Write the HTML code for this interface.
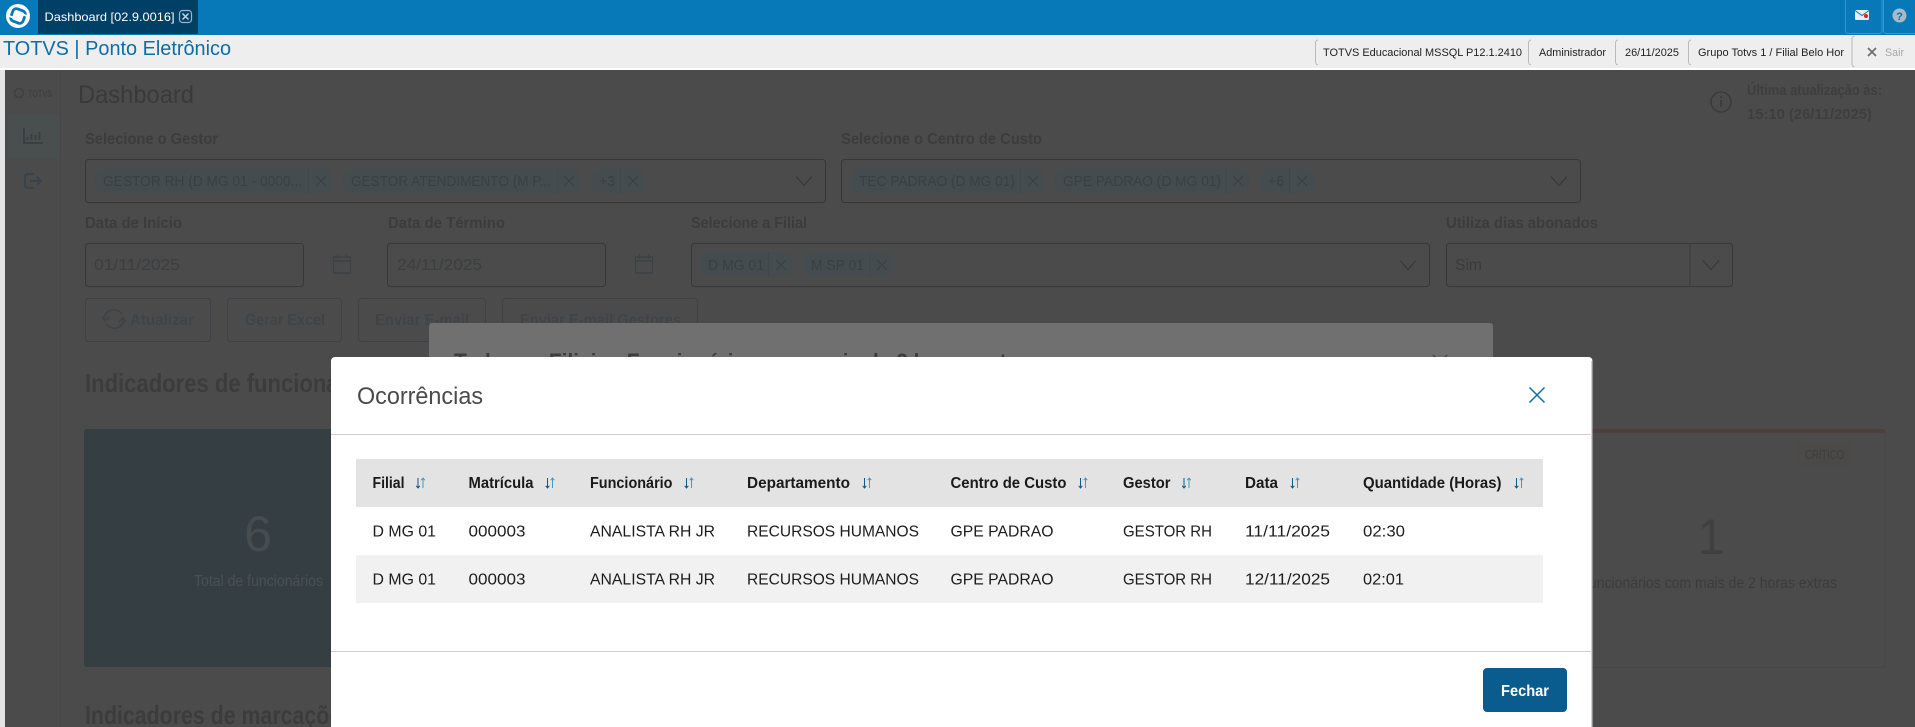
<!DOCTYPE html>
<html lang="pt-BR">
<head>
<meta charset="utf-8">
<title>TOTVS | Ponto Eletrônico</title>
<style>
html,body{margin:0;padding:0;width:1915px;height:727px;overflow:hidden;background:#4b4b4b}
svg{display:block;font-family:"Liberation Sans",sans-serif}
.lb{font-size:16px;font-weight:700;fill:#3c3c3c}
.chip{fill:#444c4f}
.chipt{font-size:15px;fill:#3a3f42}
.ic{fill:none;stroke:#3b4145;stroke-width:1.2}
.box{fill:none;stroke:#383838;stroke-width:1}
.btn{fill:none;stroke:#39434a;stroke-width:1}
.btnt{font-size:16px;font-weight:700;fill:#3e454a}
.th{font-size:16px;font-weight:700;fill:#1a1a1a}
.td{font-size:16px;fill:#1c1c1c}
.tp{font-size:11px;fill:#222}
.sep{stroke:#b9b9b9;stroke-width:1;fill:none}
.so1{fill:none;stroke:#0b5c8c;stroke-width:1}
.so2{fill:none;stroke:#3d9bd0;stroke-width:1}
</style>
</head>
<body>
<svg width="1915" height="727" viewBox="0 0 1915 727" xmlns="http://www.w3.org/2000/svg">
<defs>
<g id="sort">
<path class="so1" d="M-2.500-5V5M-4.300 2.800-2.500 5-.7 2.800"/>
<path class="so2" d="M2.500 5V-5M.7-2.800 2.500-5 4.300-2.800"/>
</g>
<g id="chev"><path fill="none" stroke="#383838" stroke-width="1.2" d="M-8-4.500 0 4.500 8-4.500"/></g>
<g id="x"><path fill="none" stroke="#3b4145" stroke-width="1.1" d="M-5-5 5 5M5-5-5 5"/></g>
<g id="cal"><path class="ic" d="M-8.500-7h17v16h-17zM-8.500-3h17M-4.500-9.500v4M4.500-9.500v4"/></g>
</defs>

<!-- top bar -->
<rect width="1915" height="35" fill="#0779b8"/>
<circle cx="18" cy="16" r="12" fill="#fff"/>
<rect x="11.500" y="9.500" width="13" height="13" rx="3.500" fill="none" stroke="#0779b8" stroke-width="2.800" transform="rotate(20 18 16)"/>
<path d="M8 15.500l6 2.500M22 14l6 2.500" stroke="#fff" stroke-width="2" fill="none"/>

<path d="M38 0h160v33a1 1 0 0 1-1 1H39a1 1 0 0 1-1-1z" fill="#003f66"/>
<text x="44.500" y="21" font-size="12" fill="#fff" textLength="130" lengthAdjust="spacingAndGlyphs">Dashboard [02.9.0016]</text>
<rect x="179.500" y="10.500" width="12" height="12" rx="3" fill="none" stroke="#9fb6c5" stroke-width="1.2"/>
<path d="M182.500 13.500l6 6M188.500 13.500l-6 6" stroke="#c6d4dd" stroke-width="1.500" fill="none"/>
<path d="M1845.500 0v31a2.500 2.500 0 0 0 2.500 2.500h31.500a2.500 2.500 0 0 0 2.500-2.500V0M1883.500 0v31a2.500 2.500 0 0 0 2.500 2.500h29" fill="none" stroke="#2f97dc"/>
<rect x="1855" y="10" width="14" height="10" rx="1" fill="#e9eef1"/>
<path d="M1855 10.500l7 5 7-5" stroke="#0779b8" stroke-width="1" fill="none"/>
<circle cx="1866" cy="16" r="2" fill="#e8202a"/>
<circle cx="1899.500" cy="15.500" r="7" fill="#a7bbc7"/>
<text x="1899.500" y="20" font-size="11" font-weight="700" fill="#0b6ea8" text-anchor="middle">?</text>

<!-- title bar -->
<rect y="35" width="1915" height="33" fill="#eee"/>
<rect y="68" width="1915" height="2" fill="#fff"/>
<text x="3" y="55" font-size="20.500" fill="#0b6ea8" textLength="228" lengthAdjust="spacingAndGlyphs">TOTVS | Ponto Eletrônico</text>
<path class="sep" d="M1318 40a3 3 0 0 0-2.500 3v19a3 3 0 0 0 2.500 3M1531 40a3 3 0 0 0-2.500 3v19a3 3 0 0 0 2.500 3M1618 40a3 3 0 0 0-2.500 3v19a3 3 0 0 0 2.500 3M1691 40a3 3 0 0 0-2.500 3v19a3 3 0 0 0 2.500 3M1854.500 36a3 3 0 0 0-2.500 3v25a3 3 0 0 0 2.500 3"/>
<text class="tp" x="1323" y="56" textLength="199" lengthAdjust="spacingAndGlyphs">TOTVS Educacional MSSQL P12.1.2410</text>
<text class="tp" x="1539" y="56" textLength="67" lengthAdjust="spacingAndGlyphs">Administrador</text>
<text class="tp" x="1625" y="56" textLength="54" lengthAdjust="spacingAndGlyphs">26/11/2025</text>
<text class="tp" x="1698" y="56" textLength="146" lengthAdjust="spacingAndGlyphs">Grupo Totvs 1 / Filial Belo Hor</text>
<path d="M1868 48l8 8M1876 48l-8 8" stroke="#6d6d6d" stroke-width="1.700" fill="none"/>
<text x="1885" y="56" font-size="11" fill="#a8a8a8" textLength="19" lengthAdjust="spacingAndGlyphs">Sair</text>

<!-- dimmed page -->
<rect y="70" width="1915" height="657" fill="#4b4b4b"/>
<rect y="70" width="5" height="657" fill="#e3e3e3"/>
<rect x="60" y="70" width="1" height="657" fill="#474747"/>
<rect x="8" y="115" width="52" height="44" fill="#494e4f"/>
<circle cx="19" cy="93" r="4.500" fill="none" stroke="#404040" stroke-width="1.500"/>
<text x="28" y="97" font-size="10" font-weight="700" fill="#404040" textLength="24" lengthAdjust="spacingAndGlyphs">TOTVS</text>
<path d="M24 128v15h19M27.500 140v-3M31.500 140v-6M35.500 140v-5M39.500 140v-8" fill="none" stroke="#363e43" stroke-width="1.700"/>
<path d="M34 174h-6a3 3 0 0 0-3 3v8a3 3 0 0 0 3 3h6M30 181h11M37 177l4 4-4 4" fill="none" stroke="#36434c" stroke-width="2"/>

<text x="78" y="103" font-size="25" fill="#3a3a3a" textLength="116" lengthAdjust="spacingAndGlyphs">Dashboard</text>
<circle cx="1721" cy="102" r="10" fill="none" stroke="#393939" stroke-width="1.300"/>
<path d="M1721 100v7M1721 96v2" stroke="#393939" stroke-width="1.500"/>
<text x="1747" y="95" font-size="15" font-weight="700" fill="#3e3e3e" textLength="135" lengthAdjust="spacingAndGlyphs">Última atualização às:</text>
<text x="1747" y="119" font-size="15" font-weight="700" fill="#3e3e3e" textLength="125" lengthAdjust="spacingAndGlyphs">15:10 (26/11/2025)</text>

<!-- first row -->
<text class="lb" x="85" y="144" textLength="133" lengthAdjust="spacingAndGlyphs">Selecione o Gestor</text>
<text class="lb" x="841" y="144" textLength="201" lengthAdjust="spacingAndGlyphs">Selecione o Centro de Custo</text>
<rect class="box" x="85.500" y="159.500" width="740" height="43" rx="3"/>
<rect class="box" x="841.500" y="159.500" width="739" height="43" rx="3"/>
<use href="#chev" x="804" y="181"/><use href="#chev" x="1559" y="181"/>

<rect class="chip" x="94" y="168" width="240" height="25" rx="12.500"/>
<text class="chipt" x="103" y="186" textLength="199" lengthAdjust="spacingAndGlyphs">GESTOR RH (D MG 01 - 0000...</text>
<path d="M308.500 168v25" stroke="#3f474a"/><use href="#x" x="321" y="181"/>
<rect class="chip" x="342" y="168" width="240" height="25" rx="12.500"/>
<text class="chipt" x="351" y="186" textLength="200" lengthAdjust="spacingAndGlyphs">GESTOR ATENDIMENTO (M P...</text>
<path d="M557 168v25" stroke="#3f474a"/><use href="#x" x="569" y="181"/>
<rect class="chip" x="591" y="168" width="55" height="25" rx="12.500"/>
<text class="chipt" x="599" y="186" textLength="16" lengthAdjust="spacingAndGlyphs">+3</text>
<path d="M620.500 168v25" stroke="#3f474a"/><use href="#x" x="633" y="181"/>

<rect class="chip" x="850" y="168" width="196" height="25" rx="12.500"/>
<text class="chipt" x="859" y="186" textLength="156" lengthAdjust="spacingAndGlyphs">TEC PADRAO (D MG 01)</text>
<path d="M1020.500 168v25" stroke="#3f474a"/><use href="#x" x="1033" y="181"/>
<rect class="chip" x="1054" y="168" width="196" height="25" rx="12.500"/>
<text class="chipt" x="1063" y="186" textLength="158" lengthAdjust="spacingAndGlyphs">GPE PADRAO (D MG 01)</text>
<path d="M1226 168v25" stroke="#3f474a"/><use href="#x" x="1238" y="181"/>
<rect class="chip" x="1259" y="168" width="56" height="25" rx="12.500"/>
<text class="chipt" x="1268" y="186" textLength="16" lengthAdjust="spacingAndGlyphs">+6</text>
<path d="M1289.500 168v25" stroke="#3f474a"/><use href="#x" x="1302" y="181"/>

<!-- second row -->
<text class="lb" x="85" y="228" textLength="97" lengthAdjust="spacingAndGlyphs">Data de Início</text>
<text class="lb" x="388" y="228" textLength="117" lengthAdjust="spacingAndGlyphs">Data de Término</text>
<text class="lb" x="691" y="228" textLength="116" lengthAdjust="spacingAndGlyphs">Selecione a Filial</text>
<text class="lb" x="1446" y="228" textLength="152" lengthAdjust="spacingAndGlyphs">Utiliza dias abonados</text>
<rect class="box" x="85.500" y="243.500" width="218" height="43" rx="3"/>
<text x="94" y="270" font-size="16" fill="#3c3e40" textLength="86" lengthAdjust="spacingAndGlyphs">01/11/2025</text>
<use href="#cal" x="342" y="264"/>
<rect class="box" x="387.500" y="243.500" width="218" height="43" rx="3"/>
<text x="397" y="270" font-size="16" fill="#3c3e40" textLength="85" lengthAdjust="spacingAndGlyphs">24/11/2025</text>
<use href="#cal" x="644" y="264"/>
<rect class="box" x="691.500" y="243.500" width="738" height="43" rx="3"/>
<rect class="chip" x="700" y="252" width="94" height="25" rx="12.500"/>
<text class="chipt" x="708" y="270" textLength="56" lengthAdjust="spacingAndGlyphs">D MG 01</text>
<path d="M768.500 252v25" stroke="#3f474a"/><use href="#x" x="781" y="265"/>
<rect class="chip" x="802" y="252" width="93" height="25" rx="12.500"/>
<text class="chipt" x="811" y="270" textLength="53" lengthAdjust="spacingAndGlyphs">M SP 01</text>
<path d="M870 252v25" stroke="#3f474a"/><use href="#x" x="882" y="265"/>
<use href="#chev" x="1408" y="265"/>
<rect class="box" x="1446.500" y="243.500" width="286" height="43" rx="3"/>
<path d="M1690 243.500v43" stroke="#383838"/>
<text x="1455" y="270" font-size="15.500" fill="#3b3b3b" textLength="27" lengthAdjust="spacingAndGlyphs">Sim</text>
<use href="#chev" x="1711" y="265"/>

<!-- buttons -->
<rect class="btn" x="85.500" y="298.500" width="125" height="43" rx="3"/>
<g fill="none" stroke="#3c444a" stroke-width="1.600">
<path d="M104 318a10 10 0 0 1 18-4M124 320a10 10 0 0 1-18 4"/>
<path d="M102 317l3 4 4-4M119 322l4-4 3 4"/>
</g>
<text class="btnt" x="130" y="325" textLength="64" lengthAdjust="spacingAndGlyphs">Atualizar</text>
<rect class="btn" x="227.500" y="298.500" width="114" height="43" rx="3"/>
<text class="btnt" x="245" y="325" textLength="80" lengthAdjust="spacingAndGlyphs">Gerar Excel</text>
<rect class="btn" x="358.500" y="298.500" width="127" height="43" rx="3"/>
<text class="btnt" x="375" y="325" textLength="94" lengthAdjust="spacingAndGlyphs">Enviar E-mail</text>
<rect class="btn" x="502.500" y="298.500" width="195" height="43" rx="3"/>
<text class="btnt" x="520" y="325" textLength="161" lengthAdjust="spacingAndGlyphs">Enviar E-mail Gestores</text>

<!-- section headings and cards -->
<text x="85" y="392" font-size="26" font-weight="700" fill="#3c3c3c" textLength="294" lengthAdjust="spacingAndGlyphs">Indicadores de funcionários</text>
<rect x="84" y="429" width="300" height="238" rx="3" fill="#353f43"/>
<text x="258" y="551" font-size="50" fill="#474c4f" text-anchor="middle">6</text>
<text x="194" y="586" font-size="15.500" fill="#495053" textLength="129" lengthAdjust="spacingAndGlyphs">Total de funcionários</text>
<text x="85" y="724" font-size="26" font-weight="700" fill="#3c3c3c" textLength="268" lengthAdjust="spacingAndGlyphs">Indicadores de marcações</text>

<rect x="1500" y="429.500" width="385" height="238" rx="3" fill="none" stroke="#474747"/>
<path d="M1500 433v-1a3 3 0 0 1 3-3h379a3 3 0 0 1 3 3v1z" fill="#4e3e3e"/>
<rect x="1796" y="443" width="56" height="23" rx="3" fill="#4c4949"/>
<text x="1805" y="459" font-size="13" fill="#3e3e3e" textLength="39" lengthAdjust="spacingAndGlyphs">CRÍTICO</text>
<text x="1711" y="554" font-size="50" fill="#404040" text-anchor="middle">1</text>
<text x="1585" y="588" font-size="15.500" fill="#3c3c3c" textLength="252" lengthAdjust="spacingAndGlyphs">funcionários com mais de 2 horas extras</text>

<!-- background modal -->
<rect x="429" y="323" width="1064" height="120" rx="3" fill="#707070"/>
<text x="454" y="369" font-size="22" font-weight="700" fill="#3d3d3d" textLength="584" lengthAdjust="spacingAndGlyphs">Todas as Filiais - Funcionários com mais de 2 horas extras</text>
<path d="M1433 355l7 7 7-7" stroke="#3a4a55" stroke-width="1.500" fill="none"/>

<!-- foreground modal -->
<path d="M331 727V361a4 4 0 0 1 4-4h1253.500a4 4 0 0 1 4 4V727z" fill="#fff"/>
<rect x="1591" y="361" width="1.500" height="366" fill="#d0d0d0"/>
<text x="357" y="404" font-size="24" fill="#4a4a4a" textLength="126" lengthAdjust="spacingAndGlyphs">Ocorrências</text>
<path d="M1529.500 387.500l15 15M1544.500 387.500l-15 15" stroke="#0b6ea8" stroke-width="1.500" fill="none"/>
<rect x="331" y="434" width="1261" height="1" fill="#cfcfcf"/>

<rect x="356" y="459" width="1187" height="48" fill="#e3e3e3"/>
<rect x="356" y="555" width="1187" height="48" fill="#f1f1f1"/>

<text class="th" x="372.500" y="488" textLength="32" lengthAdjust="spacingAndGlyphs">Filial</text>
<text class="th" x="468.500" y="488" textLength="65" lengthAdjust="spacingAndGlyphs">Matrícula</text>
<text class="th" x="590" y="488" textLength="82.500" lengthAdjust="spacingAndGlyphs">Funcionário</text>
<text class="th" x="747" y="488" textLength="103" lengthAdjust="spacingAndGlyphs">Departamento</text>
<text class="th" x="950.500" y="488" textLength="116" lengthAdjust="spacingAndGlyphs">Centro de Custo</text>
<text class="th" x="1123" y="488" textLength="47.500" lengthAdjust="spacingAndGlyphs">Gestor</text>
<text class="th" x="1245" y="488" textLength="33" lengthAdjust="spacingAndGlyphs">Data</text>
<text class="th" x="1363" y="488" textLength="138.500" lengthAdjust="spacingAndGlyphs">Quantidade (Horas)</text>
<use href="#sort" x="420.500" y="483"/>
<use href="#sort" x="550" y="483"/>
<use href="#sort" x="689" y="483"/>
<use href="#sort" x="867" y="483"/>
<use href="#sort" x="1083" y="483"/>
<use href="#sort" x="1186.500" y="483"/>
<use href="#sort" x="1295" y="483"/>
<use href="#sort" x="1519" y="483"/>

<text class="td" x="372.500" y="536.500" textLength="63.500" lengthAdjust="spacingAndGlyphs">D MG 01</text>
<text class="td" x="468.500" y="536.500" textLength="57" lengthAdjust="spacingAndGlyphs">000003</text>
<text class="td" x="590" y="536.500" textLength="125" lengthAdjust="spacingAndGlyphs">ANALISTA RH JR</text>
<text class="td" x="747" y="536.500" textLength="172" lengthAdjust="spacingAndGlyphs">RECURSOS HUMANOS</text>
<text class="td" x="950.500" y="536.500" textLength="103" lengthAdjust="spacingAndGlyphs">GPE PADRAO</text>
<text class="td" x="1123" y="536.500" textLength="89" lengthAdjust="spacingAndGlyphs">GESTOR RH</text>
<text class="td" x="1245" y="536.500" textLength="85" lengthAdjust="spacingAndGlyphs">11/11/2025</text>
<text class="td" x="1363" y="536.500" textLength="42" lengthAdjust="spacingAndGlyphs">02:30</text>

<text class="td" x="372.500" y="584.500" textLength="63.500" lengthAdjust="spacingAndGlyphs">D MG 01</text>
<text class="td" x="468.500" y="584.500" textLength="57" lengthAdjust="spacingAndGlyphs">000003</text>
<text class="td" x="590" y="584.500" textLength="125" lengthAdjust="spacingAndGlyphs">ANALISTA RH JR</text>
<text class="td" x="747" y="584.500" textLength="172" lengthAdjust="spacingAndGlyphs">RECURSOS HUMANOS</text>
<text class="td" x="950.500" y="584.500" textLength="103" lengthAdjust="spacingAndGlyphs">GPE PADRAO</text>
<text class="td" x="1123" y="584.500" textLength="89" lengthAdjust="spacingAndGlyphs">GESTOR RH</text>
<text class="td" x="1245" y="584.500" textLength="85" lengthAdjust="spacingAndGlyphs">12/11/2025</text>
<text class="td" x="1363" y="584.500" textLength="41" lengthAdjust="spacingAndGlyphs">02:01</text>

<rect x="331" y="651" width="1261" height="1" fill="#cfcfcf"/>
<rect x="1483" y="668" width="84" height="44" rx="4" fill="#0a5c8e"/>
<text x="1501" y="696" font-size="16" font-weight="700" fill="#fff" textLength="48" lengthAdjust="spacingAndGlyphs">Fechar</text>
</svg>
</body>
</html>
